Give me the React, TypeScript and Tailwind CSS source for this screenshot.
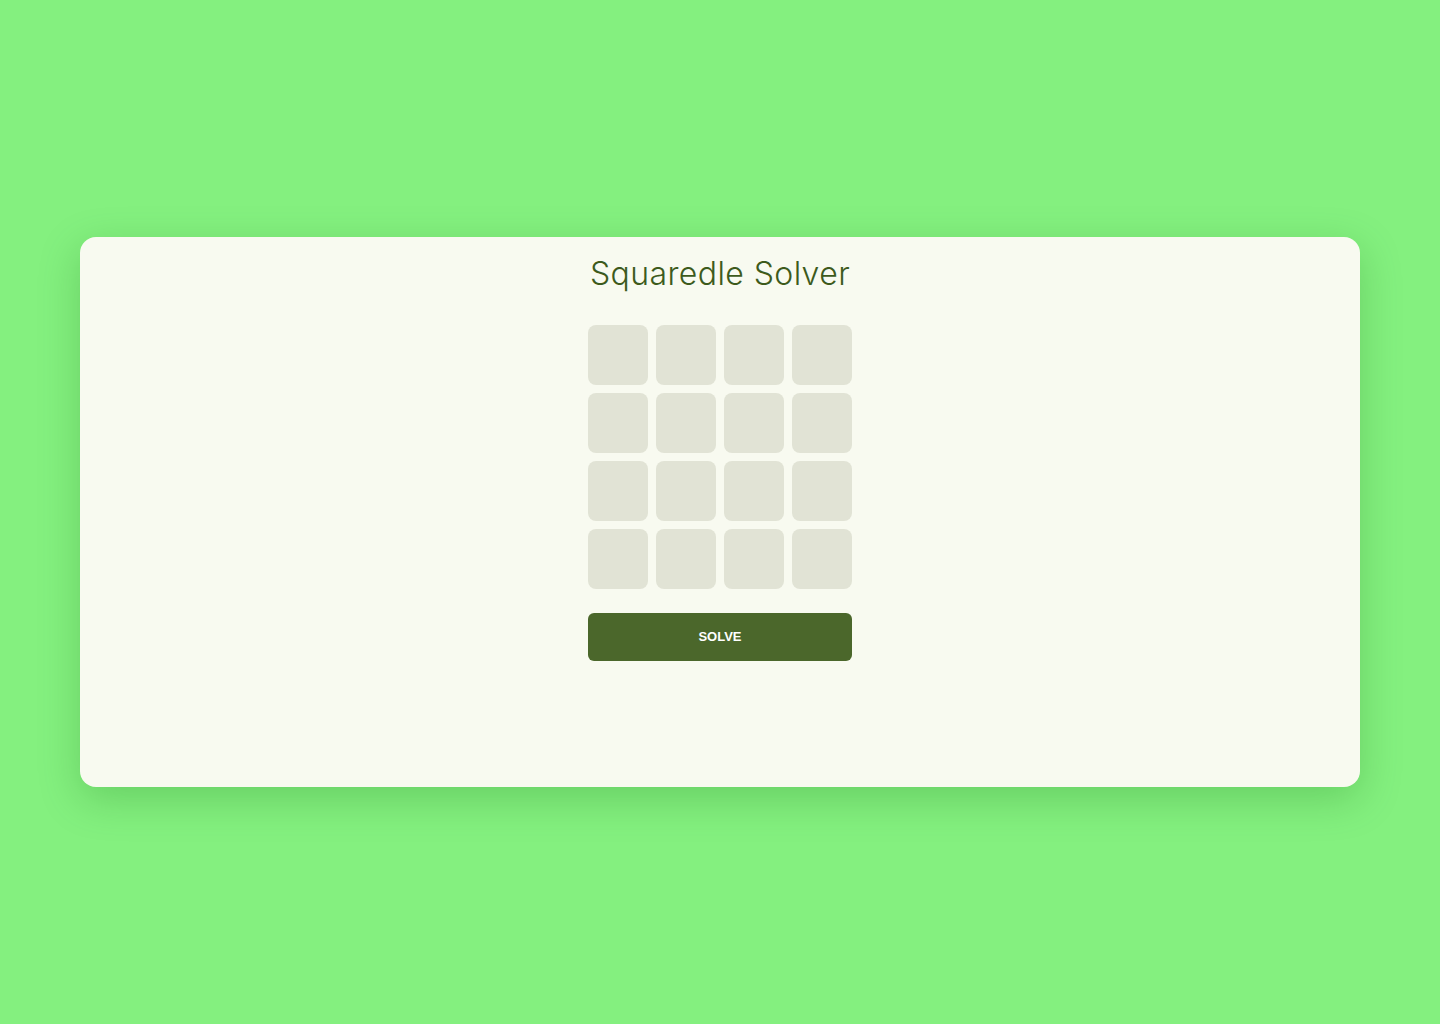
import React from "react";

export default function App() {
  const tiles = Array.from({ length: 16 });
  return (
    <div className="min-h-screen w-full bg-[#84f07f] flex items-center justify-center px-20">
      <div className="w-full h-[550px] bg-[#f8faf0] rounded-2xl shadow-[0_12px_40px_rgba(20,110,20,0.25)] flex flex-col items-center pt-4">
        <h1
          className="text-[32px] leading-[42px] text-[#3d5a1c] font-light tracking-[0.4px]"
          style={{ fontFamily: "Inter, 'Open Sans', sans-serif" }}
        >
          Squaredle Solver
        </h1>
        <div className="mt-[30px] grid grid-cols-4 gap-2">
          {tiles.map((_, i) => (
            <div key={i} className="w-[60px] h-[60px] rounded-lg bg-[#e1e3d5]" />
          ))}
        </div>
        <button
          className="mt-6 w-[264px] h-12 rounded-md bg-[#4b672b] text-white text-[13px] font-bold"
          style={{ fontFamily: "'Liberation Sans', Arial, sans-serif" }}
        >
          SOLVE
        </button>
      </div>
    </div>
  );
}
